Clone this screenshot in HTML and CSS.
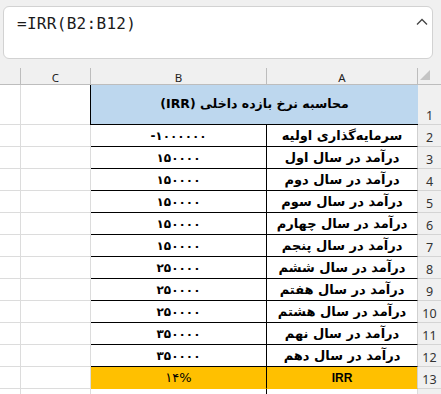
FILE: index.html
```html
<!DOCTYPE html>
<html lang="fa">
<head>
<meta charset="utf-8">
<link rel="stylesheet" href="styles.css">
</head>
<body>
<div class="top">
  <div class="formula">
    <span class="ftext">=IRR(B2:B12)</span>
    <svg class="caret" width="12" height="8" viewBox="0 0 12 8"><path d="M1 6.5 L6 1.5 L11 6.5" fill="none" stroke="#444" stroke-width="1.3"/></svg>
  </div>
</div>
<div class="sheet">
  <div class="ch"></div>
  <div class="ch">C</div>
  <div class="ch">B</div>
  <div class="ch">A</div>
  <div class="ch corner"><svg width="10" height="10" viewBox="0 0 10 10"><path d="M0 10 L10 10 L10 0 Z" fill="#c4c4c4"/></svg></div>

  <div class="g tall"></div><div class="g tall"></div>
  <div class="title">محاسبه نرخ بازده داخلی (IRR)</div>
  <div class="rn tall">1</div>

  <div class="g"></div><div class="g"></div><div class="tb num">-۱۰۰۰۰۰۰</div><div class="ta">سرمایه‌گذاری اولیه</div><div class="rn">2</div>
  <div class="g"></div><div class="g"></div><div class="tb num">۱۵۰۰۰۰</div><div class="ta">درآمد در سال اول</div><div class="rn">3</div>
  <div class="g"></div><div class="g"></div><div class="tb num">۱۵۰۰۰۰</div><div class="ta">درآمد در سال دوم</div><div class="rn">4</div>
  <div class="g"></div><div class="g"></div><div class="tb num">۱۵۰۰۰۰</div><div class="ta">درآمد در سال سوم</div><div class="rn">5</div>
  <div class="g"></div><div class="g"></div><div class="tb num">۱۵۰۰۰۰</div><div class="ta">درآمد در سال چهارم</div><div class="rn">6</div>
  <div class="g"></div><div class="g"></div><div class="tb num">۱۵۰۰۰۰</div><div class="ta">درآمد در سال پنجم</div><div class="rn">7</div>
  <div class="g"></div><div class="g"></div><div class="tb num">۲۵۰۰۰۰</div><div class="ta">درآمد در سال ششم</div><div class="rn">8</div>
  <div class="g"></div><div class="g"></div><div class="tb num">۲۵۰۰۰۰</div><div class="ta">درآمد در سال هفتم</div><div class="rn">9</div>
  <div class="g"></div><div class="g"></div><div class="tb num">۲۵۰۰۰۰</div><div class="ta">درآمد در سال هشتم</div><div class="rn">10</div>
  <div class="g"></div><div class="g"></div><div class="tb num">۳۵۰۰۰۰</div><div class="ta">درآمد در سال نهم</div><div class="rn">11</div>
  <div class="g"></div><div class="g"></div><div class="tb num">۳۵۰۰۰۰</div><div class="ta">درآمد در سال دهم</div><div class="rn">12</div>
  <div class="g"></div><div class="g"></div><div class="tb yb res">۱۴%</div><div class="ta yb irr">IRR</div><div class="rn">13</div>

  <div class="g"></div><div class="g"></div><div class="g"></div><div class="g"></div><div class="rn"></div>
</div>
</body>
</html>
```

FILE: styles.css
```css
html, body {
  margin: 0;
  padding: 0;
}
body {
  width: 441px;
  height: 394px;
  overflow: hidden;
  background: #f0f0f0;
  font-family: "DejaVu Sans", sans-serif;
}
.top {
  padding: 6px 8px 0 3px;
  height: 62px;
  box-sizing: border-box;
}
.formula {
  position: relative;
  height: 53px;
  box-sizing: border-box;
  background: #fff;
  border: 1px solid #d2d2d2;
  border-radius: 6px;
  padding: 7px 0 0 13px;
}
.ftext {
  font-family: "DejaVu Sans Mono", monospace;
  font-size: 16px;
  color: #1a1a1a;
  letter-spacing: 0.3px;
}
.caret {
  position: absolute;
  right: 4px;
  top: 11px;
}
.sheet {
  display: grid;
  grid-template-columns: 21px 70px 176px 151px 23px;
  grid-template-rows: 17px 40px repeat(13, 22px);
  margin-top: 6px;
}
.ch {
  border-right: 1px solid #bdbdbd;
  border-bottom: 1px solid #bdbdbd;
  background: #f0f0f0;
  font-family: "Noto Sans", sans-serif;
  font-size: 11.5px;
  color: #222;
  display: flex;
  align-items: center;
  justify-content: center;
  box-sizing: border-box;
  line-height: 1;
  padding-top: 4px;
}
.ch.corner {
  border-right: none;
  align-items: flex-start;
  justify-content: flex-start;
  padding: 2px 0 0 2px;
}
.g {
  background: #fff;
  border-right: 1px solid #dcdcdc;
  border-bottom: 1px solid #dcdcdc;
  box-sizing: border-box;
}
.g:nth-child(5n+2) { border-right: 1px solid #000; }
.title {
  grid-column: 3 / 5;
  background: #bdd7ee;
  border-left: 1px solid #000;
  border-bottom: 1px solid #000;
  margin-left: -1px;
  box-sizing: border-box;
  display: flex;
  align-items: center;
  justify-content: center;
  direction: rtl;
  font-weight: bold;
  font-size: 12.5px;
  color: #000;
  padding-bottom: 3px;
}
.tb, .ta {
  background: #fff;
  box-sizing: border-box;
  border-bottom: 1px solid #000;
  display: flex;
  align-items: center;
  justify-content: center;
  font-weight: bold;
  font-size: 13px;
  color: #000;
  direction: rtl;
}
.tb {
  border-right: 1px solid #000;
}
.ta {
  border-right: 1px solid #d0d0d0;
}
.num { direction: ltr; font-size: 12px; }
.yb {
  background: #ffc000;
  border-bottom-color: #ffc000;
}
.res {
  font-weight: normal;
  font-size: 13px;
  direction: ltr;
}
.irr {
  font-family: "Liberation Sans", sans-serif;
  font-size: 12px;
}
.rn {
  background: #f0f0f0;
  border-bottom: 1px solid #d4d4d4;
  box-sizing: border-box;
  font-family: "Noto Sans", sans-serif;
  font-size: 12.5px;
  color: #333;
  display: flex;
  align-items: flex-end;
  justify-content: center;
  line-height: 1;
  padding-bottom: 2px;
}
```
